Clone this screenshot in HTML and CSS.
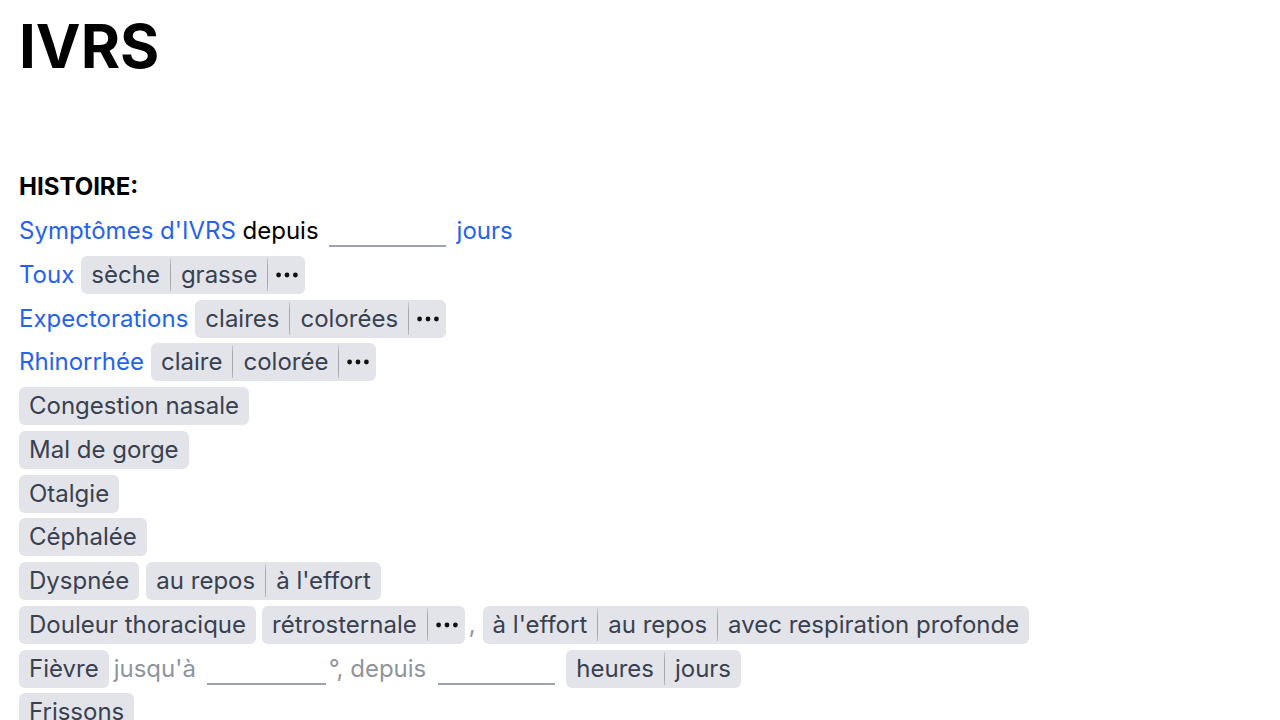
FILE: index.html
```html
<!DOCTYPE html>
<html lang="fr">
<head>
<meta charset="utf-8">
<title>IVRS</title>
<link rel="stylesheet" href="styles.css">
</head>
<body>
<main class="page">
  <h1 class="title">IVRS</h1>
  <h2 class="section">HISTOIRE:</h2>
  <div class="rows">
    <div class="row">
      <span class="txt"><span class="link">Symptômes d'IVRS</span> depuis</span>
      <span class="field field-a"></span>
      <span class="link">jours</span>
    </div>
    <div class="row">
      <span class="link">Toux</span>
      <span class="chip"><span class="seg">sèche</span><span class="seg">grasse</span><span class="seg more"><svg class="dots" viewBox="0 0 22 6" width="22" height="6"><circle cx="2.6" cy="3" r="2.4"/><circle cx="11" cy="3" r="2.4"/><circle cx="19.4" cy="3" r="2.4"/></svg></span></span>
    </div>
    <div class="row">
      <span class="link">Expectorations</span>
      <span class="chip"><span class="seg">claires</span><span class="seg">colorées</span><span class="seg more"><svg class="dots" viewBox="0 0 22 6" width="22" height="6"><circle cx="2.6" cy="3" r="2.4"/><circle cx="11" cy="3" r="2.4"/><circle cx="19.4" cy="3" r="2.4"/></svg></span></span>
    </div>
    <div class="row">
      <span class="link">Rhinorrhée</span>
      <span class="chip"><span class="seg">claire</span><span class="seg">colorée</span><span class="seg more"><svg class="dots" viewBox="0 0 22 6" width="22" height="6"><circle cx="2.6" cy="3" r="2.4"/><circle cx="11" cy="3" r="2.4"/><circle cx="19.4" cy="3" r="2.4"/></svg></span></span>
    </div>
    <div class="row">
      <span class="chip"><span class="seg">Congestion nasale</span></span>
    </div>
    <div class="row">
      <span class="chip"><span class="seg">Mal de gorge</span></span>
    </div>
    <div class="row">
      <span class="chip"><span class="seg">Otalgie</span></span>
    </div>
    <div class="row">
      <span class="chip"><span class="seg">Céphalée</span></span>
    </div>
    <div class="row">
      <span class="chip"><span class="seg">Dyspnée</span></span>
      <span class="chip"><span class="seg">au repos</span><span class="seg">à l'effort</span></span>
    </div>
    <div class="row">
      <span class="chip"><span class="seg">Douleur thoracique</span></span>
      <span class="chip chip-tight"><span class="seg">rétrosternale</span><span class="seg more"><svg class="dots" viewBox="0 0 22 6" width="22" height="6"><circle cx="2.6" cy="3" r="2.4"/><circle cx="11" cy="3" r="2.4"/><circle cx="19.4" cy="3" r="2.4"/></svg></span></span>
      <span class="comma">,</span>
      <span class="chip"><span class="seg">à l'effort</span><span class="seg">au repos</span><span class="seg">avec respiration profonde</span></span>
    </div>
    <div class="row">
      <span class="chip chip-fever"><span class="seg">Fièvre</span></span>
      <span class="muted">jusqu'à</span>
      <span class="field field-b"></span>
      <span class="muted">°, depuis</span>
      <span class="field field-c"></span>
      <span class="chip"><span class="seg">heures</span><span class="seg">jours</span></span>
    </div>
    <div class="row">
      <span class="chip"><span class="seg">Frissons</span></span>
    </div>
  </div>
</main>
</body>
</html>
```

FILE: styles.css
```css
html, body {
  margin: 0;
  padding: 0;
  background: #ffffff;
}

body {
  font-family: Inter, "Noto Sans", "Liberation Sans", sans-serif;
  color: #000000;
  overflow: hidden;
}

.page {
  padding: 16px 19px 0;
}

.title {
  margin: 0;
  font-size: 60px;
  line-height: 60px;
  font-weight: 700;
  letter-spacing: 0;
}

.section {
  margin: 95px 0 0;
  font-size: 24px;
  line-height: 32px;
  font-weight: 700;
}

.rows {
  display: flex;
  flex-direction: column;
  gap: 5.75px;
  margin-top: 9px;
}

.row {
  display: flex;
  align-items: center;
  gap: 7px;
  height: 38px;
  font-size: 24px;
  line-height: 32px;
  white-space: nowrap;
}

.link {
  color: #2563eb;
}

.muted {
  color: #8f949d;
}

.comma {
  color: #8f949d;
  margin-left: -3px;
  margin-right: 0;
}

.field {
  display: block;
  width: 118px;
  height: 32px;
  box-sizing: border-box;
  border-bottom: 2px solid #9ca3af;
  align-self: flex-start;
  margin-top: 3px;
}

.field-a {
  margin-left: 3px;
  margin-right: 4px;
  width: 117px;
}

.field-b {
  margin-left: 4px;
  margin-right: -4px;
  width: 119px;
}

.field-c {
  margin-left: 5px;
  margin-right: 4px;
  width: 117px;
}

.chip {
  display: inline-flex;
  align-items: stretch;
  height: 38px;
  box-sizing: border-box;
  padding: 3px 0;
  background: #e3e4e9;
  border-radius: 6px;
  color: #394150;
}

.chip-tight {
  margin-left: -1px;
}

.chip-fever {
  margin-right: -2px;
}

.seg {
  position: relative;
  display: inline-flex;
  align-items: center;
  padding: 0 10px;
}

.seg + .seg::before {
  content: "";
  position: absolute;
  left: -1px;
  top: -1px;
  bottom: 0;
  width: 1px;
  background: linear-gradient(to bottom, rgba(150, 154, 162, 0.3), #a3a7ae 25%, #a3a7ae 80%, rgba(150, 154, 162, 0.5));
}

.seg + .seg {
  margin-left: 1px;
}

.seg.more {
  padding: 0 7px 0 8px;
}

.dots {
  display: block;
  fill: #111111;
}
```
